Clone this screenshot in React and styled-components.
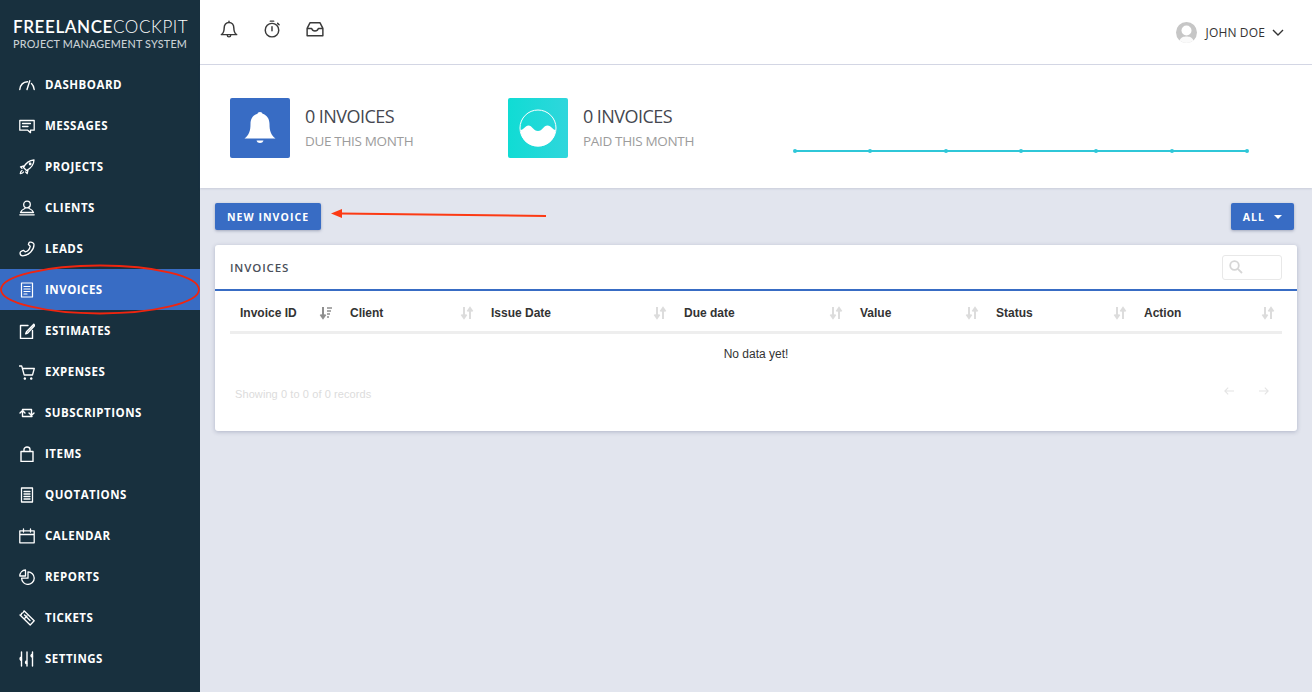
import React from 'react';
import styled, { createGlobalStyle } from 'styled-components';

const GlobalStyle = createGlobalStyle`
  html, body { margin: 0; padding: 0; height: 100%; overflow: hidden; }
  body { font-family: "Open Sans", "Liberation Sans", sans-serif; background: #e2e5ee; }
  * { box-sizing: border-box; }
`;

const Page = styled.div`
  position: relative;
  display: flex;
  width: 1312px;
  height: 692px;
  overflow: hidden;
`;

const Sidebar = styled.aside`
  width: 200px;
  flex: none;
  background: #18303e;
  color: #fff;
`;

const Logo = styled.div`
  height: 64px;
  padding: 18px 0 0 13px;
`;

const LogoTitle = styled.div`
  font-family: "Lato", sans-serif;
  font-size: 17px;
  line-height: 18px;
  letter-spacing: 0.6px;
  font-weight: 400;
  white-space: nowrap;
  b { font-weight: 600; }
  span { font-weight: 300; }
`;

const LogoSub = styled.div`
  font-family: "Lato", sans-serif;
  font-size: 10.8px;
  line-height: 16px;
  letter-spacing: 0.19px;
  font-weight: 500;
  color: #c9d0d5;
  white-space: nowrap;
`;

const NavItem = styled.div`
  height: 41px;
  display: flex;
  align-items: center;
  gap: 10px;
  padding-left: 19px;
  background: ${(p) => (p.$active ? '#386cc4' : 'transparent')};
  font-size: 11.5px;
  font-weight: 700;
  letter-spacing: 0.5px;
  svg { flex: none; }
`;

const Main = styled.main`
  flex: 1;
  min-width: 0;
`;

const TopBar = styled.header`
  height: 65px;
  display: flex;
  align-items: center;
  justify-content: space-between;
  background: #fff;
  border-bottom: 1px solid #d5d8e5;
  padding: 0 28px 6px 20px;
`;

const TopIcons = styled.div`
  display: flex;
  gap: 25px;
  color: #3a3a3a;
`;

const UserMenu = styled.div`
  display: flex;
  align-items: center;
  font-size: 12px;
  color: #333;
  padding-top: 7px;
  span { margin: 0 7px 0 9px; letter-spacing: 0.15px; }
`;

const StatsBand = styled.section`
  height: 123px;
  background: #fff;
  display: flex;
  padding: 33px 0 0 30px;
  box-shadow: 0 1px 2px rgba(60, 70, 110, 0.15);
  position: relative;
`;

const Stat = styled.div`
  width: 278px;
  display: flex;
  gap: 15px;
`;

const StatIcon = styled.div`
  width: 60px;
  height: 60px;
  border-radius: 2px;
  background: ${(p) => p.$bg};
  display: flex;
  align-items: center;
  justify-content: center;
`;

const StatValue = styled.div`
  font-size: 18px;
  line-height: 24px;
  margin-top: 6px;
  color: #45474f;
  letter-spacing: -0.55px;
`;

const StatLabel = styled.div`
  font-size: 13.5px;
  line-height: 20px;
  margin-top: 3px;
  color: #9c9c9c;
  letter-spacing: -0.33px;
`;

const Spark = styled.svg`
  margin: 44px 0 0 7px;
`;

const Content = styled.div`
  padding: 15px 15px 0;
`;

const Actions = styled.div`
  display: flex;
  justify-content: space-between;
  padding-right: 3px;
`;

const Button = styled.button`
  height: 27px;
  border: 0;
  border-radius: 2px;
  padding: 0 12px;
  display: flex;
  align-items: center;
  gap: ${(p) => (p.$small ? '9px' : '0')};
  background: #386cc4;
  color: #fff;
  font-family: inherit;
  font-size: 10.5px;
  font-weight: 700;
  letter-spacing: 1.05px;
  box-shadow: 0 1px 3px rgba(40, 50, 90, 0.35);
`;

const Caret = styled.i`
  width: 0;
  height: 0;
  border-left: 4px solid transparent;
  border-right: 4px solid transparent;
  border-top: 4px solid #fff;
  margin-top: 1px;
`;

const Card = styled.section`
  margin-top: 15px;
  height: 186px;
  background: #fff;
  border-radius: 3px;
  box-shadow: 0 1px 4px rgba(60, 70, 110, 0.3);
`;

const CardHead = styled.div`
  height: 46px;
  display: flex;
  align-items: center;
  justify-content: space-between;
  padding: 0 15px;
  border-bottom: 2px solid #386cc4;
`;

const CardTitle = styled.h2`
  margin: 0;
  font-size: 11.5px;
  font-weight: 600;
  letter-spacing: 0.85px;
  color: #4a4f5a;
`;

const SearchBox = styled.div`
  width: 60px;
  height: 25px;
  border: 1px solid #e8e8e8;
  border-radius: 3px;
  display: flex;
  align-items: center;
  padding-left: 6px;
  color: #d6d6d6;
`;

const Table = styled.table`
  width: 1052px;
  margin: 0 15px;
  table-layout: fixed;
  border-collapse: collapse;
  font-family: "Liberation Sans", sans-serif;
  font-size: 12px;
  color: #333;
`;

const Th = styled.th`
  height: 41px;
  padding: 4px 7px 0 10px;
  border-bottom: 3px solid #eeeeee;
  text-align: left;
  font-weight: 700;
  div { display: flex; justify-content: space-between; align-items: center; }
`;

const EmptyCell = styled.td`
  height: 42px;
  padding: 0;
  text-align: center;
`;

const Footer = styled.div`
  display: flex;
  justify-content: space-between;
  padding: 7px 28px 0 20px;
  font-family: "Liberation Sans", sans-serif;
  font-size: 11px;
  color: #dcdcdc;
  line-height: 26px;
  letter-spacing: 0.09px;
`;

const Pager = styled.div`
  display: flex;
  gap: 25px;
  color: #e4e4e4;
  margin-top: -3px;
`;

const PagerArrow = styled.svg`
  margin-top: 8px;
`;

const Annotation = styled.svg`
  position: absolute;
  left: 0;
  top: 0;
  pointer-events: none;
`;

const Icon = ({ d, size = 16, w = 1.3, children }) => (
  <svg width={size} height={size} viewBox="0 0 16 16" fill="none" stroke="currentColor" strokeWidth={w} strokeLinecap="round" strokeLinejoin="round">
    {d && <path d={d} />}
    {children}
  </svg>
);

const navItems = [
  ['DASHBOARD', <Icon w={1.4} d="M.8 12.500C1.400 8 4.400 5 8.500 4.800M12.500 6.500c1.500 1.400 2.400 3.500 2.700 6M10.800 3.800 8 12.500" />],
  ['MESSAGES', <Icon d="M.8 2.500h14.400v9.700h-3.700v2.500l-2.700-2.500H.8zM3.500 5.500h8M3.500 8.500h5.500" />],
  ['PROJECTS', <Icon d="M15 1C10 1.300 6.800 4 4.500 8.500l3 3C12 9.200 14.800 6 15 1zM4.800 7 1.500 7.800l1.500 1.500M9 11.200 8.200 14.500l-1.500-1.500M10.500 4.200h1.300v1.300h-1.300zM3 11.500c-1 .5-1.500 1.500-1.700 3.200 1.700-.2 2.700-.7 3.200-1.700" />],
  ['CLIENTS', <Icon d="M8 1.200a3.300 3.300 0 1 1 0 6.600 3.300 3.300 0 0 1 0-6.600zM5.800 8.500C3.500 9.500 2 10.800 1.500 12.500h13C14 10.800 12.500 9.500 10.200 8.500M.8 14.800h14.400" />],
  ['LEADS', <Icon d="M11 1.200c-.5 0-1 .4-1.200 1l-.4 1.300 1.800 1.800c-.5 2.500-2.700 5-5 5.600L4.500 9.300l-1.500.5c-1.400.5-2 1.300-2 2.300 0 1.500 1.200 2.700 2.800 2.700 5.700 0 11.200-5.700 11.200-11 0-1.500-1.400-2.600-3.500-2.600z" />],
  ['INVOICES', <Icon w={1.2} d="M2.500 1h11v14h-11zM5 4.500h6M5 7h6M5 9.500h6M5 12h3" />],
  ['ESTIMATES', <Icon w={1.4} d="M9 2.500H1.500v13h12V7.500M14.800 1.200 7.500 8.800l-.8 2 2-.8 7-7.500z" />],
  ['EXPENSES', <Icon d="M.5 2h2.200l2.500 9h8.300l1.800-6.500H4M5.800 14a.6.600 0 1 0 .1 0zM12.200 14a.6.600 0 1 0 .1 0z" />],
  ['SUBSCRIPTIONS', <Icon w={1.4} d="M13 11.500H3.500V6M1 8l2.500-2.500L6 8M3.500 4.500H12.500V10M10 8l2.500 2.500L15 8" />],
  ['ITEMS', <Icon w={1.4} d="M2 5.500h12v10H2zM5 5.500V3.500a3 2.500 0 0 1 6 0v2" />],
  ['QUOTATIONS', <Icon w={1.3} d="M2.500 1h11v14h-11zM5 4.500h6M5 7h6M5 9.500h6M5 12h6" />],
  ['CALENDAR', <Icon w={1.3} d="M.8 2.800h14.400v12H.8zM.8 6.500h14.400M4.500 1v3M11.500 1v3" />],
  ['REPORTS', <Icon d="M6.500 1v6H.8c0-3.300 2.500-5.800 5.700-6zM9 2.800A6.300 6.300 0 1 1 2.600 9.200H9z" />],
  ['TICKETS', <Icon d="M5 .8 15.200 10.800l-4 4.200L1 5c1 0 1.600-.4 1.500-1.500C3.500 3.500 4.800 2 5 .8zM5.500 5l5.500 5.500M6 8l2-2" />],
  ['SETTINGS', <Icon w={1.4} d="M2.500 1v5M2.500 9.500V15M8 1v9M8 13v2M13.500 1v2M13.500 6.500V15M2.500 6.300a1.500 1.500 0 1 0 .1 3zM8 10a1.500 1.500 0 1 0 .1 3zM13.500 3.200a1.500 1.500 0 1 0 .1 3z" />],
];

const columns = [
  ['Invoice ID', 110, true],
  ['Client', 141],
  ['Issue Date', 193],
  ['Due date', 176],
  ['Value', 136],
  ['Status', 148],
  ['Action', 148],
];

const SortIcon = ({ active }) => (
  <svg width="14" height="14" viewBox="0 0 14 14" fill="none" stroke={active ? '#8f8f8f' : '#dcdcdc'} strokeWidth="2">
    <path d="M4 1v10M1.500 8.500 4 12l2.500-3.500" />
    {active ? <path d="M8 2h5M8 5h4M8 8h3M8 11h2" strokeWidth="1.500" /> : <path d="M10 13V3M7.500 5.500 10 2l2.500 3.500" />}
  </svg>
);

const sparkPoints = [2, 77, 153, 228, 303, 379, 454];

export default function App() {
  return (
    <Page>
      <GlobalStyle />
      <Sidebar>
        <Logo>
          <LogoTitle><b>FREELANCE</b><span>COCKPIT</span></LogoTitle>
          <LogoSub>PROJECT MANAGEMENT SYSTEM</LogoSub>
        </Logo>
        <nav>
          {navItems.map(([label, icon]) => (
            <NavItem key={label} $active={label === 'INVOICES'}>{icon}{label}</NavItem>
          ))}
        </nav>
      </Sidebar>

      <Main>
        <TopBar>
          <TopIcons>
            <Icon size={18} w={1.3} d="M8 1v1.200M8 2.200c-2.600 0-4.300 2-4.300 4.800 0 3-.7 4.800-2.500 6h13.600c-1.800-1.200-2.500-3-2.500-6 0-2.800-1.700-4.800-4.300-4.800zM6.500 13.500a1.500 1.500 0 0 0 3 0" />
            <Icon size={18} w={1.3} d="M8 3a6 6 0 1 1 0 12A6 6 0 0 1 8 3zM8 6v3.500M6.500 1h3M13 3l1.300 1.300" />
            <Icon size={18} w={1.3} d="M1 7.500 3.500 2.500h9L15 7.500v6.500H1zM1 7.500h4c.5 1.500 1.500 2.200 3 2.200s2.500-.7 3-2.200h4" />
          </TopIcons>
          <UserMenu>
            <svg width="21" height="21" viewBox="0 0 21 21">
              <circle cx="10.500" cy="10.500" r="10.500" fill="#c6c6c6" />
              <circle cx="10.500" cy="8.500" r="5" fill="#fff" />
              <path d="M3.500 18.500c1.500-3.500 4-4 7-4s5.500.5 7 4c-2 1.600-4.500 2.500-7 2.500s-5-.9-7-2.500z" fill="#fff" opacity="0.9" />
            </svg>
            <span>JOHN DOE</span>
            <svg width="12" height="8" viewBox="0 0 12 8" fill="none" stroke="#333" strokeWidth="1.400"><path d="M1 1l5 5 5-5" /></svg>
          </UserMenu>
        </TopBar>

        <StatsBand>
          <Stat>
            <StatIcon $bg="#386cc4">
              <svg width="32" height="36" viewBox="0 0 32 36" fill="#fff">
                <path d="M16 2c1.500 0 2.300.8 2.500 1.800C23 5 25.500 9 25.500 14c0 7 1.500 11 6 14.500H.5C5 25 6.500 21 6.500 14c0-5 2.500-9 7-10.200C13.700 2.800 14.500 2 16 2z" />
                <path d="M12.500 30.500h7c-.5 1.700-1.800 2.500-3.500 2.500s-3-.8-3.500-2.500z" />
              </svg>
            </StatIcon>
            <div>
              <StatValue>0 INVOICES</StatValue>
              <StatLabel>DUE THIS MONTH</StatLabel>
            </div>
          </Stat>
          <Stat>
            <StatIcon $bg="linear-gradient(90deg, #10dcd4, #2fd6dc)">
              <svg width="38" height="38" viewBox="0 0 38 38">
                <circle cx="19" cy="19" r="18" fill="none" stroke="#fff" strokeWidth="1" />
                <path d="M1.500 21C5 21 6 16.500 9.500 16.500S14.500 22 19 22s5.500-5.500 9.500-5.500 5 4.500 8 4.500c0 9-7.500 16.500-17.500 16.500S1.500 30 1.500 21z" fill="#fff" />
              </svg>
            </StatIcon>
            <div>
              <StatValue>0 INVOICES</StatValue>
              <StatLabel>PAID THIS MONTH</StatLabel>
            </div>
          </Stat>
          <Spark width="460" height="20" viewBox="0 0 460 20">
            <path d="M2 9H454" stroke="#2fc7d8" strokeWidth="2" />
            {sparkPoints.map((x) => <circle key={x} cx={x} cy="9" r="2" fill="#2fc7d8" />)}
          </Spark>
        </StatsBand>

        <Content>
          <Actions>
            <Button>NEW INVOICE</Button>
            <Button $small>ALL <Caret /></Button>
          </Actions>
          <Card>
            <CardHead>
              <CardTitle>INVOICES</CardTitle>
              <SearchBox>
                <svg width="14" height="14" viewBox="0 0 14 14" fill="none" stroke="currentColor" strokeWidth="1.800"><circle cx="5.500" cy="5.500" r="4.300" /><path d="M8.800 8.800 13 13" /></svg>
              </SearchBox>
            </CardHead>
            <Table>
              <colgroup>
                {columns.map(([name, width]) => <col key={name} width={width} />)}
              </colgroup>
              <thead>
                <tr>
                  {columns.map(([name, , active]) => (
                    <Th key={name}><div>{name}<SortIcon active={active} /></div></Th>
                  ))}
                </tr>
              </thead>
              <tbody>
                <tr><EmptyCell colSpan={7}>No data yet!</EmptyCell></tr>
              </tbody>
            </Table>
            <Footer>
              <span>Showing 0 to 0 of 0 records</span>
              <Pager>
                <PagerArrow width="10" height="10" viewBox="0 0 12 10" fill="none" stroke="currentColor" strokeWidth="1.300"><path d="M12 5H1M5 1 1 5l4 4" /></PagerArrow>
                <PagerArrow width="10" height="10" viewBox="0 0 12 10" fill="none" stroke="currentColor" strokeWidth="1.300"><path d="M0 5h11M7 1l4 4-4 4" /></PagerArrow>
              </Pager>
            </Footer>
          </Card>
        </Content>
      </Main>

      <Annotation width="1312" height="692" viewBox="0 0 1312 692">
        <ellipse cx="100" cy="289.500" rx="99" ry="24" fill="none" stroke="#f0250f" strokeWidth="1.800" />
        <path d="M340 213.500 546 216" stroke="#fc3a14" strokeWidth="2" fill="none" />
        <path d="M331 213.500 342 209v9z" fill="#fc3a14" />
      </Annotation>
    </Page>
  );
}
